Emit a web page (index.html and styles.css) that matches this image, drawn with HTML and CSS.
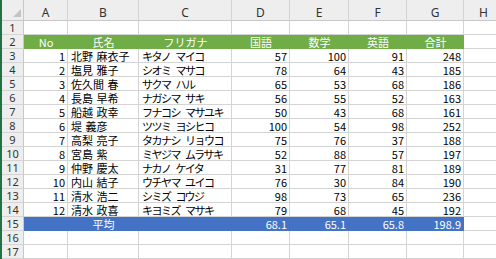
FILE: index.html
```html
<!DOCTYPE html>
<html lang="ja">
<head>
    <meta charset="UTF-8">
    <meta name="viewport" content="width=device-width, initial-scale=1.0">
    <title>成績一覧</title>
    <link rel="stylesheet" href="styles.css">
</head>
<body>
    <div class="window">
        <div class="sheet" id="sheet"></div>
    </div>

    <script>
        const sheet = document.getElementById('sheet');
        const letras = ['A', 'B', 'C', 'D', 'E', 'F', 'G', 'H'];

        const alunos = [
            [1, '北野 麻衣子', 'キタノ マイコ', 57, 100, 91, 248],
            [2, '塩見 雅子', 'シオミ マサコ', 78, 64, 43, 185],
            [3, '佐久間 春', 'サクマ ハル', 65, 53, 68, 186],
            [4, '長島 早希', 'ナガシマ サキ', 56, 55, 52, 163],
            [5, '船越 政幸', 'フナコシ マサユキ', 50, 43, 68, 161],
            [6, '堤 義彦', 'ツツミ ヨシヒコ', 100, 54, 98, 252],
            [7, '高梨 亮子', 'タカナシ リョウコ', 75, 76, 37, 188],
            [8, '宮島 紫', 'ミヤジマ ムラサキ', 52, 88, 57, 197],
            [9, '仲野 慶太', 'ナカノ ケイタ', 31, 77, 81, 189],
            [10, '内山 結子', 'ウチヤマ ユイコ', 76, 30, 84, 190],
            [11, '清水 浩二', 'シミズ コウジ', 98, 73, 65, 236],
            [12, '清水 政喜', 'キヨミズ マサキ', 79, 68, 45, 192]
        ];

        function celula(texto, classe) {
            const div = document.createElement('div');
            div.className = classe;
            div.textContent = texto;
            sheet.appendChild(div);
        }

        function linha(numero, valores, extra) {
            celula(numero, 'row-head');
            for (let i = 0; i < 8; i++) {
                let classe = 'cell';
                if (extra && i < 7) classe += ' ' + extra;
                if (i === 0 || i >= 3) classe += ' num';
                if (i === 1) classe += ' name';
                if (i === 2) classe += ' kana';
                const v = valores[i];
                celula(v === undefined ? '' : v, classe);
            }
        }

        // cabeçalho das colunas
        celula('', 'corner');
        letras.forEach(l => celula(l, 'col-head'));

        linha(1, []);
        linha(2, ['No', '氏名', 'フリガナ', '国語', '数学', '英語', '合計'], 'title');
        alunos.forEach((a, i) => linha(i + 3, a));
        linha(15, ['', '平均', '', '68.1', '65.1', '65.8', '198.9'], 'average');
        linha(16, []);
        linha(17, []);
    </script>
</body>
</html>
```

FILE: styles.css
```css
body {
    margin: 0;
    background: #fff;
    font-family: 'Noto Sans CJK JP', sans-serif;
    overflow: hidden;
}

.window {
    border-left: 2px solid #217346;
    height: 259px;
    overflow: hidden;
}

.sheet {
    display: grid;
    grid-template-columns: 22px 44px 71px 93px 58px 59px 58px 57px 40px;
    grid-template-rows: 21px repeat(17, 14px);
}

.sheet > div {
    box-sizing: border-box;
    white-space: pre;
    overflow: hidden;
}

.corner {
    background: #eeeeee;
    border-right: 1px solid #c8c8c8;
    border-bottom: 1px solid #c8c8c8;
    position: relative;
}

.corner::after {
    content: '';
    position: absolute;
    right: 2px;
    bottom: 3px;
    border-style: solid;
    border-width: 0 0 8px 8px;
    border-color: transparent transparent #c4c4c4 transparent;
}

.col-head {
    background: #eeeeee;
    border-right: 1px solid #d4d4d4;
    border-bottom: 1px solid #c8c8c8;
    font-family: 'Noto Sans', sans-serif;
    font-size: 12px;
    color: #333;
    text-align: center;
    line-height: 13px;
    padding-top: 6px;
}

.row-head {
    background: #eeeeee;
    border-right: 1px solid #c8c8c8;
    border-bottom: 1px solid #d4d4d4;
    font-family: 'Noto Sans', sans-serif;
    font-size: 11px;
    color: #333;
    text-align: center;
    line-height: 14px;
}

.cell {
    border-right: 1px solid #d4d4d4;
    border-bottom: 1px solid #d4d4d4;
    font-size: 11px;
    line-height: 14px;
    color: #000;
    padding: 0 2px 0 3px;
}

.cell.num {
    text-align: right;
}

.cell.name {
    word-spacing: 1px;
}

.cell.kana {
    letter-spacing: -1.5px;
    word-spacing: 4px;
}

.cell.title {
    background: #70ad47;
    border-color: #70ad47;
    color: #fff;
    text-align: center;
    letter-spacing: 0;
    word-spacing: 0;
}

.cell.average {
    background: #4472c4;
    border-color: #4472c4;
    color: #fff;
}

.cell.average:nth-child(9n+3) {
    text-align: center;
}
```
